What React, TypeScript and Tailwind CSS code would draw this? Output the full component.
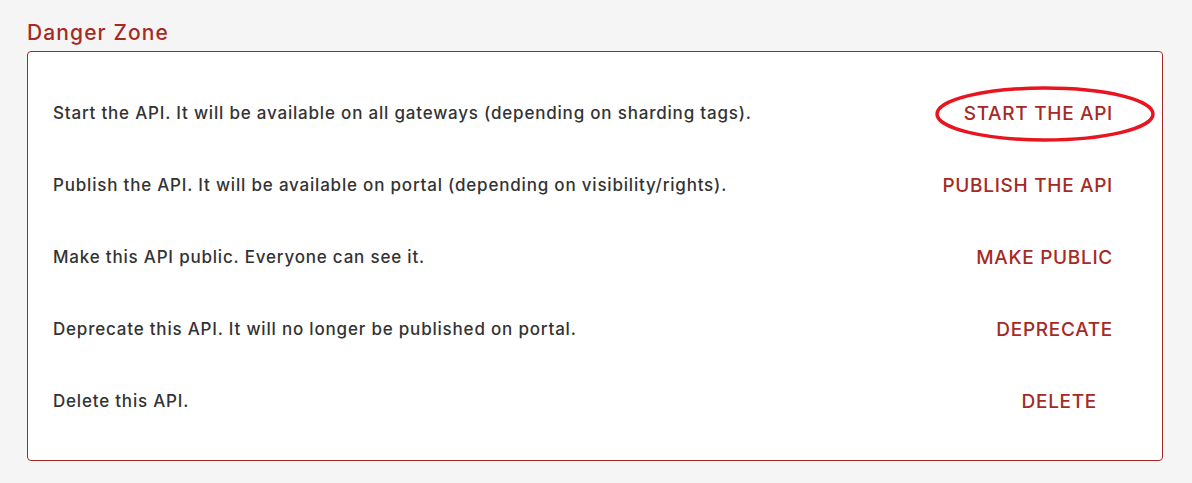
import React from 'react'

type Action = {
  text: string
  label: string
  extra?: string
}

const actions: Action[] = [
  { text: 'Start the API. It will be available on all gateways (depending on sharding tags).', label: 'START THE API' },
  { text: 'Publish the API. It will be available on portal (depending on visibility/rights).', label: 'PUBLISH THE API' },
  { text: 'Make this API public. Everyone can see it.', label: 'MAKE PUBLIC' },
  { text: 'Deprecate this API. It will no longer be published on portal.', label: 'DEPRECATE' },
  { text: 'Delete this API.', label: 'DELETE', extra: 'mr-4' },
]

const App: React.FC = () => {
  return (
    <div className="min-h-[483px] bg-[#f5f5f5] px-[27px] pt-[19px] font-['Inter',sans-serif]">
      <h2 className="text-[21px] leading-[28px] font-medium tracking-[1.1px] text-[#a52a25]">Danger Zone</h2>
      <div className="mt-[4px] w-[1136px] rounded border border-[#a52a25] bg-white pl-[25px] pr-[49px] pt-[26px] pb-[22px]">
        {actions.map((a, i) => (
          <div key={a.label} className="flex h-[72px] items-center justify-between">
            <p className="text-[17px] font-medium tracking-[0.8px] text-[#333]">{a.text}</p>
            <div className={`relative ${a.extra ?? ''}`}>
              <button type="button" className="text-[19px] leading-[28px] font-medium tracking-[0.7px] text-[#a52a25]">
                {a.label}
              </button>
              {i === 0 && (
                <svg className="pointer-events-none absolute left-[-30px] top-[-15px]" width="222" height="58" viewBox="0 0 222 58">
                  <ellipse cx="111" cy="29" rx="108" ry="26" fill="none" stroke="#e8141f" strokeWidth="3.5" />
                </svg>
              )}
            </div>
          </div>
        ))}
      </div>
    </div>
  )
}

export default App
